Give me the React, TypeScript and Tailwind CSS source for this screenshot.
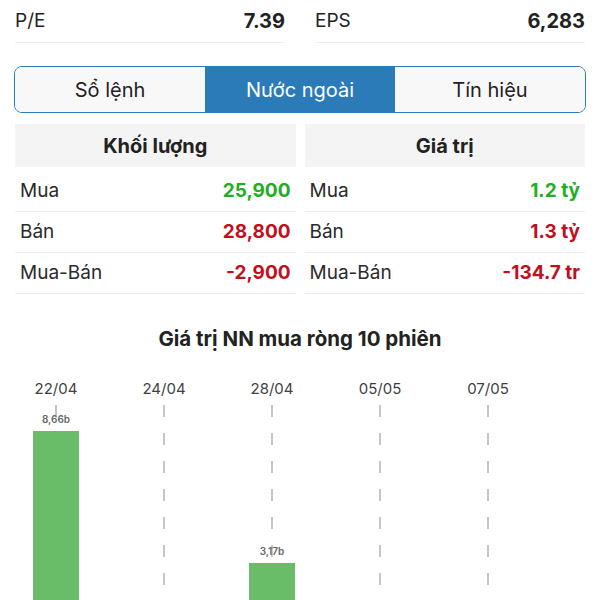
const font = "font-['Inter','Noto_Sans',sans-serif]"

const ratios = [
  { label: 'P/E', value: '7.39' },
  { label: 'EPS', value: '6,283' },
]

const tabs = ['Sổ lệnh', 'Nước ngoài', 'Tín hiệu']

const volume = [
  { name: 'Mua', value: '25,900', color: 'text-[#22ad22]' },
  { name: 'Bán', value: '28,800', color: 'text-[#c20f1d]' },
  { name: 'Mua-Bán', value: '-2,900', color: 'text-[#c20f1d]' },
]

const money = [
  { name: 'Mua', value: '1.2 tỷ', color: 'text-[#22ad22]' },
  { name: 'Bán', value: '1.3 tỷ', color: 'text-[#c20f1d]' },
  { name: 'Mua-Bán', value: '-134.7 tr', color: 'text-[#c20f1d]' },
]

// 10 phiên, chỉ nhãn ngày ở phiên chẵn
const sessions = [
  { date: '22/04', value: 8.66, text: '8,66b' },
  { date: '', value: 0, text: '' },
  { date: '24/04', value: 0, text: '' },
  { date: '', value: 0, text: '' },
  { date: '28/04', value: 3.17, text: '3,17b' },
  { date: '', value: 0, text: '' },
  { date: '05/05', value: 0, text: '' },
  { date: '', value: 0, text: '' },
  { date: '07/05', value: 0, text: '' },
  { date: '', value: 0, text: '' },
]

const maxValue = 8.66
const maxBar = 208

function StatTable({
  title,
  rows,
}: {
  title: string
  rows: { name: string; value: string; color: string }[]
}) {
  return (
    <div className="flex flex-col">
      <div className="flex h-[43px] items-center justify-center bg-[#f4f4f4] text-[20px] font-bold text-[#222]">
        {title}
      </div>
      <div className="mt-[4px] flex flex-col">
        {rows.map((row) => (
          <div
            key={row.name}
            className="flex h-[41px] items-center justify-between border-b border-[#efefef] px-[5px]"
          >
            <span className="text-[19px] text-[#2a2a2a]">{row.name}</span>
            <span className={`text-[19px] font-bold ${row.color}`}>
              {row.value}
            </span>
          </div>
        ))}
      </div>
    </div>
  )
}

export default function App() {
  return (
    <div className={`h-[600px] w-[600px] overflow-hidden bg-white ${font}`}>
      <div className="grid grid-cols-2 gap-[30px] px-[15px]">
        {ratios.map((item) => (
          <div
            key={item.label}
            className="flex h-[43px] items-center justify-between border-b border-[#efefef]"
          >
            <span className="text-[19px] leading-[24px] text-[#222]">{item.label}</span>
            <span className="text-[20px] leading-[24px] font-bold text-[#222]">
              {item.value}
            </span>
          </div>
        ))}
      </div>

      <div className="mx-[14px] mt-[23px] flex h-[47px] overflow-hidden rounded-[8px] border-[1.5px] border-[#2a7bb8]">
        {tabs.map((tab, index) => (
          <div
            key={tab}
            className={
              index === 1
                ? 'flex flex-1 items-center justify-center bg-[#2a7bb8] text-[20px] text-white'
                : 'flex flex-1 items-center justify-center bg-[#f8f8f8] text-[20px] text-[#222]'
            }
          >
            {tab}
          </div>
        ))}
      </div>

      <div className="mt-[11px] grid grid-cols-2 gap-[9px] px-[15px]">
        <StatTable title="Khối lượng" rows={volume} />
        <StatTable title="Giá trị" rows={money} />
      </div>

      <h2 className="mt-[33px] text-center text-[20.5px] leading-[24px] font-bold text-[#222]">
        Giá trị NN mua ròng 10 phiên
      </h2>

      <div className="mt-[28px] ml-[29px] flex w-[540px]">
        {sessions.map((s, index) => (
          <div key={index} className="flex w-[54px] flex-col items-center">
            <div className="h-[20px] text-[15px] leading-[20px] text-[#3f3f3f]">
              {s.date}
            </div>
            <div className="relative flex h-[240px] w-full flex-col items-center justify-end">
              {s.date && (
                <div className="absolute top-[6px] bottom-0 left-[26px] w-[2px] bg-[repeating-linear-gradient(to_bottom,#c6c6c6_0_12px,transparent_12px_28px)]" />
              )}
              {s.value > 0 && (
                <>
                  <span className="relative mb-[6px] text-[10px] leading-[12px] font-semibold text-[#666]">
                    {s.text}
                  </span>
                  <div
                    className="relative w-[46px] bg-[#6abd68]"
                    style={{ height: (s.value / maxValue) * maxBar }}
                  />
                </>
              )}
            </div>
          </div>
        ))}
      </div>
    </div>
  )
}
